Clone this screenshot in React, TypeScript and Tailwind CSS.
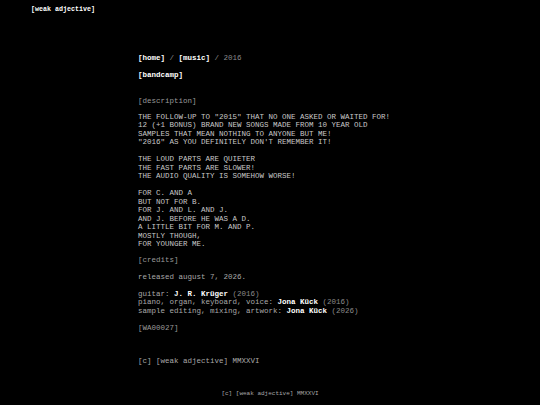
const mono = { fontFamily: '"Liberation Mono", "DejaVu Sans Mono", monospace' };

const Credit = ({ role, name, year }: { role: string; name: string; year: string }) => (
  <p>
    <span className="text-[#a8a8a8]">{role}: </span>
    <span className="font-bold text-white">{name}</span>
    <span className="text-[#8a8a8a]"> ({year})</span>
  </p>
);

export default function App() {
  return (
    <div
      className="min-h-screen bg-black text-[#c8c8c8] flex flex-col antialiased"
      style={mono}
    >
      <header className="pt-[5px] pl-[31px] text-[6.67px] leading-[8px] font-bold text-white">
        [weak adjective]
      </header>

      <main className="flex-1 w-[264px] mx-auto mt-[41px] text-[7.5px] leading-[8.5px]">
        <nav>
          <span className="font-bold text-white">[home]</span>
          <span className="text-[#8a8a8a]"> / </span>
          <span className="font-bold text-white">[music]</span>
          <span className="text-[#8a8a8a]"> / 2016</span>
        </nav>
        <p className="mt-[8.5px] font-bold text-white">[bandcamp]</p>

        <p className="mt-[17.5px] text-[#9a9a9a]">[description]</p>

        <div className="mt-[7px] flex flex-col gap-[8.5px] whitespace-nowrap">
          <div>
            <p>THE FOLLOW-UP TO "2015" THAT NO ONE ASKED OR WAITED FOR!</p>
            <p>12 (+1 BONUS) BRAND NEW SONGS MADE FROM 10 YEAR OLD</p>
            <p>SAMPLES THAT MEAN NOTHING TO ANYONE BUT ME!</p>
            <p>"2016" AS YOU DEFINITELY DON'T REMEMBER IT!</p>
          </div>
          <div>
            <p>THE LOUD PARTS ARE QUIETER</p>
            <p>THE FAST PARTS ARE SLOWER!</p>
            <p>THE AUDIO QUALITY IS SOMEHOW WORSE!</p>
          </div>
          <div>
            <p>FOR C. AND A</p>
            <p>BUT NOT FOR B.</p>
            <p>FOR J. AND L. AND J.</p>
            <p>AND J. BEFORE HE WAS A D.</p>
            <p>A LITTLE BIT FOR M. AND P.</p>
            <p>MOSTLY THOUGH,</p>
            <p>FOR YOUNGER ME.</p>
          </div>
        </div>

        <p className="mt-[7px] text-[#9a9a9a]">[credits]</p>
        <p className="mt-[8.5px] text-[#a8a8a8]">released august 7, 2026.</p>

        <div className="mt-[8.5px] whitespace-nowrap">
          <Credit role="guitar" name="J. R. Krüger" year="2016" />
          <Credit role="piano, organ, keyboard, voice" name="Jona Kück" year="2016" />
          <Credit role="sample editing, mixing, artwork" name="Jona Kück" year="2026" />
        </div>

        <p className="mt-[8.5px] text-[#9a9a9a]">[WA00027]</p>

        <p className="mt-[24.5px] text-[#a8a8a8]">[c] [weak adjective] MMXXVI</p>
      </main>

      <footer className="pb-[7px] text-center text-[6px] leading-[8px] text-[#a8a8a8]">
        [c] [weak adjective] MMXXVI
      </footer>
    </div>
  );
}
